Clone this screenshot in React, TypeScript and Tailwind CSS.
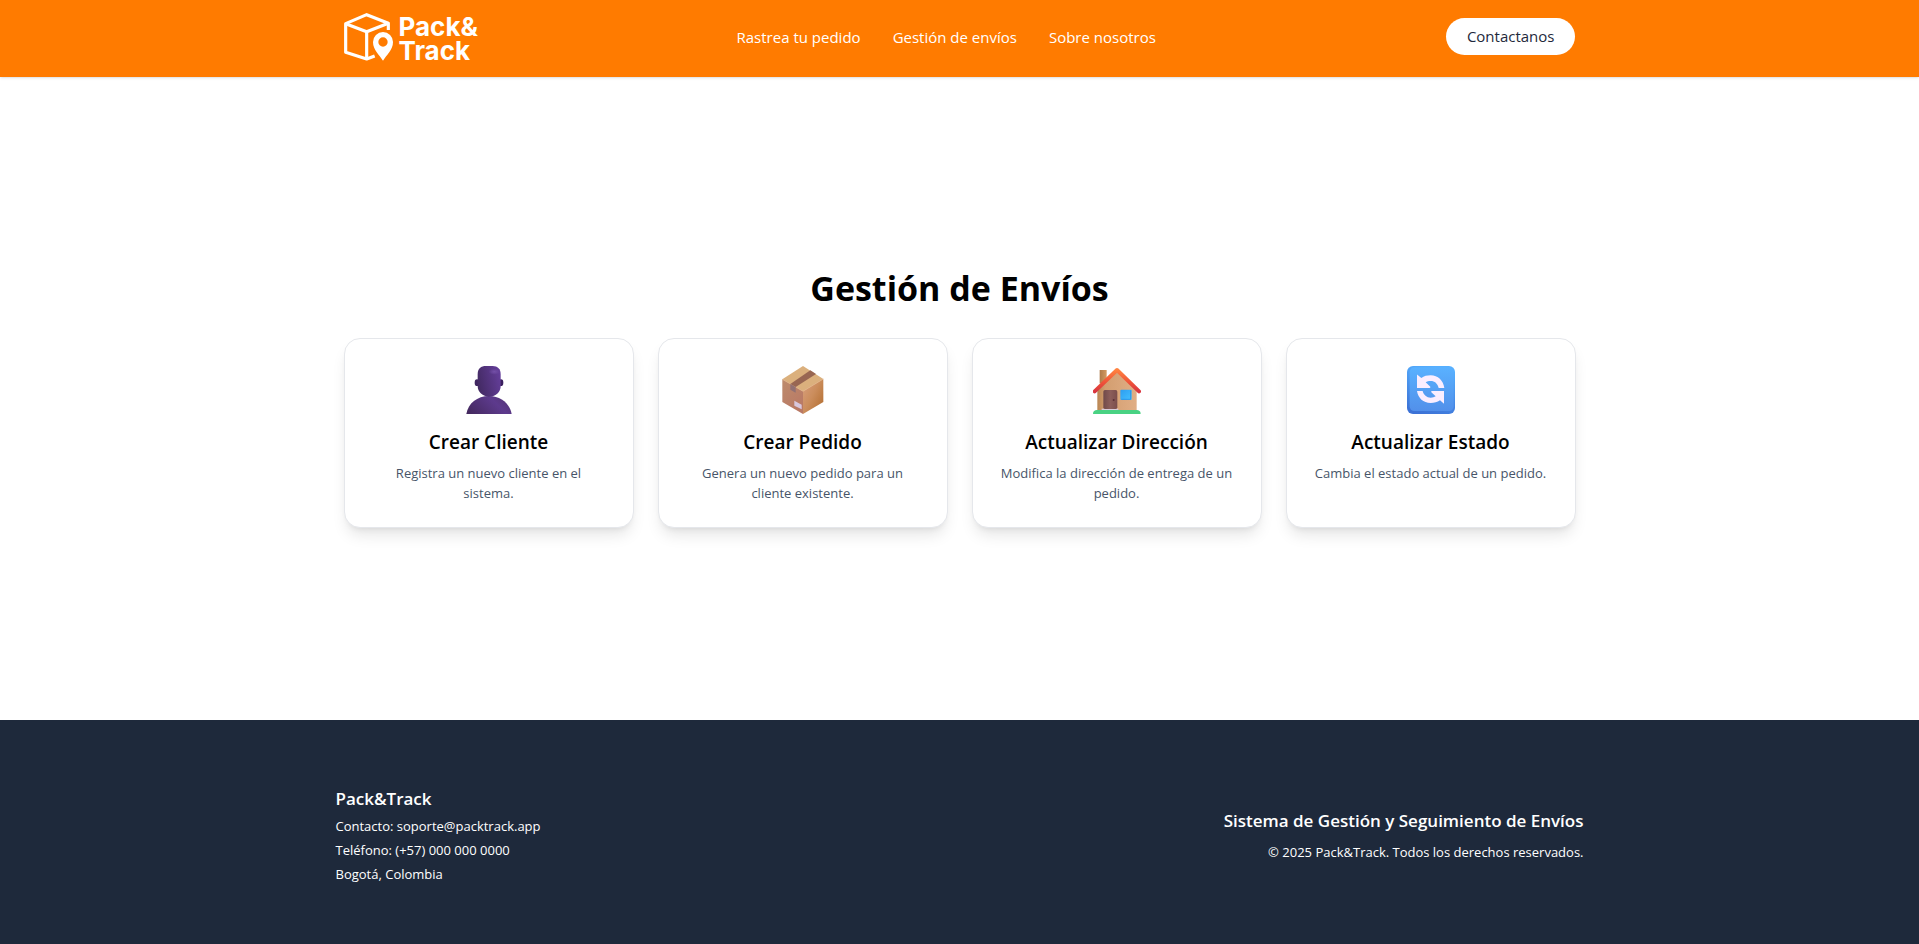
import type { ReactNode } from "react";

function LogoMark() {
  return (
    <svg viewBox="42 36 150 147" className="h-[49px] w-[50px] shrink-0" fill="none" aria-hidden="true">
      <g stroke="#fff" strokeWidth="9.5" strokeLinejoin="round">
        <path d="M175 90V70L110 44L47 71V157L110 177L134 168" />
        <path d="M47 71L110 95L175 70" />
        <path d="M110 95V177" />
      </g>
      <path
        d="M159 182C149 166 129 150 129 126A30 30 0 0 1 189 126C189 150 169 166 159 182Z"
        fill="#ff7b00"
        stroke="#ff7b00"
        strokeWidth="9"
      />
      <path
        fill="#fff"
        fillRule="evenodd"
        d="M159 182C149 166 129 150 129 126A30 30 0 0 1 189 126C189 150 169 166 159 182ZM159 112A14 14 0 1 0 159 140A14 14 0 1 0 159 112Z"
      />
    </svg>
  );
}

function PersonIcon() {
  return (
    <svg viewBox="375 108 144 144" className="size-12" aria-hidden="true">
      <defs>
        <linearGradient id="person-head" x1="0" y1="0.6" x2="1" y2="0.3">
          <stop offset="0" stopColor="#432a63" />
          <stop offset="1" stopColor="#643e9a" />
        </linearGradient>
        <linearGradient id="person-body" x1="0" y1="0.8" x2="1" y2="0.4">
          <stop offset="0" stopColor="#44295f" />
          <stop offset="0.7" stopColor="#5d3a8d" />
          <stop offset="1" stopColor="#543478" />
        </linearGradient>
        <radialGradient id="person-shine">
          <stop offset="0" stopColor="#7450a8" />
          <stop offset="1" stopColor="#7450a8" stopOpacity="0" />
        </radialGradient>
      </defs>
      <ellipse cx="411" cy="158" rx="7" ry="10" fill="#3f2560" />
      <ellipse cx="483" cy="158" rx="7" ry="10" fill="#3a1f5e" />
      <path d="M379 252C384 220 412 198 447 198S509 220 515 252Z" fill="url(#person-body)" />
      <path d="M413 132C413 116 423 108 438 108H458C473 108 482 117 482 132V168C482 186 468 200 448 200S413 186 413 168Z" fill="url(#person-head)" />
      <ellipse cx="463" cy="125" rx="17" ry="9" fill="url(#person-shine)" />
    </svg>
  );
}

function PackageIcon() {
  return (
    <svg viewBox="386 108 144 144" className="size-12" aria-hidden="true">
      <defs>
        <linearGradient id="box-left" x1="0" y1="0" x2="0.6" y2="1">
          <stop offset="0" stopColor="#bd8b6c" />
          <stop offset="1" stopColor="#b97965" />
        </linearGradient>
        <linearGradient id="box-right" x1="0" y1="0.2" x2="0.8" y2="0.9">
          <stop offset="0" stopColor="#d69c78" />
          <stop offset="0.5" stopColor="#cb8d5c" />
          <stop offset="1" stopColor="#b87439" />
        </linearGradient>
      </defs>
      <path d="M458 108L519 147L458 184L396 148Z" fill="#dbb07d" />
      <path d="M396 148L458 184V252L396 216Z" fill="url(#box-left)" />
      <path d="M458 184L519 147V216L458 252Z" fill="url(#box-right)" />
      <path d="M396 148L458 184L519 147" fill="none" stroke="#e3b184" strokeWidth="2" />
      <path d="M480 121L497 132L436 171L420 162Z" fill="#986652" />
      <path d="M420 162L436 171V188L420 179Z" fill="#917072" />
      <path d="M432 212L454 224V238L432 227Z" fill="#d8c7dd" />
    </svg>
  );
}

function HouseIcon() {
  return (
    <svg viewBox="385 108 144 144" className="size-12" aria-hidden="true">
      <defs>
        <linearGradient id="house-wall">
          <stop offset="0" stopColor="#b98653" />
          <stop offset="0.2" stopColor="#d39e70" />
          <stop offset="1" stopColor="#e0ae85" />
        </linearGradient>
        <linearGradient id="house-chimney">
          <stop offset="0" stopColor="#ae7a49" />
          <stop offset="1" stopColor="#d49b61" />
        </linearGradient>
        <linearGradient id="house-roof" x1="0" y1="0" x2="0" y2="1">
          <stop offset="0" stopColor="#ff8240" />
          <stop offset="0.6" stopColor="#ee5138" />
          <stop offset="1" stopColor="#d93640" />
        </linearGradient>
        <linearGradient id="house-door">
          <stop offset="0" stopColor="#704a4a" />
          <stop offset="0.5" stopColor="#8c5e5a" />
          <stop offset="1" stopColor="#7a4e4c" />
        </linearGradient>
        <linearGradient id="house-window" x1="0" y1="0" x2="1" y2="1">
          <stop offset="0" stopColor="#2d9df0" />
          <stop offset="1" stopColor="#44c0ff" />
        </linearGradient>
      </defs>
      <path d="M405 120H426V160H405Z" fill="url(#house-chimney)" />
      <path d="M457 124L516 178V242H398V178Z" fill="url(#house-wall)" />
      <path d="M411 236H461V242H411Z" fill="#d6cbd9" />
      <rect x="416" y="180" width="42" height="57" rx="5" fill="url(#house-door)" />
      <circle cx="447" cy="210" r="3" fill="#5b3036" />
      <rect x="467" y="179" width="34" height="31" rx="3" fill="url(#house-window)" />
      <path d="M498 181V208H470" fill="none" stroke="#2588e0" strokeWidth="2" />
      <path d="M390 184L457 120L523 184" fill="none" stroke="url(#house-roof)" strokeWidth="12" strokeLinecap="round" strokeLinejoin="round" />
      <path d="M385 252C385 243 390 240 397 240H516C523 240 528 243 528 252Z" fill="#49d283" />
    </svg>
  );
}

function RefreshIcon() {
  return (
    <svg viewBox="381 108 144 144" className="size-12" aria-hidden="true">
      <defs>
        <linearGradient id="refresh-face" x1="0" y1="0" x2="0" y2="1">
          <stop offset="0" stopColor="#59b1ff" />
          <stop offset="1" stopColor="#5290ea" />
        </linearGradient>
        <linearGradient id="refresh-edge" x1="0.6" y1="0" x2="0.3" y2="1">
          <stop offset="0" stopColor="#55afff" />
          <stop offset="1" stopColor="#3c72d6" />
        </linearGradient>
      </defs>
      <rect x="381" y="108" width="144" height="144" rx="18" fill="url(#refresh-edge)" />
      <rect x="389" y="112" width="132" height="131" rx="14" fill="url(#refresh-face)" />
      <g fill="#fbeeff">
        <path d="M412 134L424 144C432 138 441 136 452 136C474 136 490 152 493 174H476C473 161 464 153 452 153C446 153 441 154 437 157L451 170Q452 174 448 174H411V137Q411 133 412 134Z" />
        <path d="M492 221L480 211C472 217 463 219 452 219C430 219 414 204 411 183H428C431 195 440 203 452 203C458 203 463 201 467 199L454 187Q452 183 456 183H492Z" />
      </g>
    </svg>
  );
}

const navLinks = ["Rastrea tu pedido", "Gestión de envíos", "Sobre nosotros"];

const actions: { title: string; text: string; icon: ReactNode }[] = [
  { title: "Crear Cliente", text: "Registra un nuevo cliente en el sistema.", icon: <PersonIcon /> },
  { title: "Crear Pedido", text: "Genera un nuevo pedido para un cliente existente.", icon: <PackageIcon /> },
  { title: "Actualizar Dirección", text: "Modifica la dirección de entrega de un pedido.", icon: <HouseIcon /> },
  { title: "Actualizar Estado", text: "Cambia el estado actual de un pedido.", icon: <RefreshIcon /> },
];

export default function App() {
  return (
    <div className="flex min-h-screen flex-col bg-white font-['Segoe_UI','Open_Sans',sans-serif] text-black">
      <header className="bg-[#ff7b00] shadow-sm">
        <div className="mx-auto flex max-w-7xl items-center justify-between px-6 pt-3 pb-4">
          <a href="#" className="flex h-[49px] items-start gap-[5px] text-white">
            <LogoMark />
            <span className="w-20 pt-[3px] font-['Inter',sans-serif] text-[26px] leading-6 font-bold">Pack&amp; Track</span>
          </a>
          <nav className="mr-8 flex gap-8">
            {navLinks.map((label) => (
              <a key={label} href="#" className="text-[15px] leading-6 text-white">
                {label}
              </a>
            ))}
          </nav>
          <a href="#" className="rounded-full bg-white px-[21px] py-2 text-[15px] leading-[21px] font-medium text-[#1e293b]">
            Contactanos
          </a>
        </div>
      </header>

      <main className="flex flex-1 flex-col justify-center pb-1">
        <div className="mx-auto w-full max-w-7xl px-6">
          <h1 className="mb-7 text-center text-[34px] leading-11 font-bold">Gestión de Envíos</h1>
          <div className="grid grid-cols-4 gap-6">
            {actions.map(({ title, text, icon }) => (
              <a
                key={title}
                href="#"
                className="flex flex-col items-center rounded-2xl border border-gray-200 bg-white p-6 text-center shadow-lg"
              >
                <span className="mb-[10px] flex h-[54px] items-center">{icon}</span>
                <h2 className="mb-1.5 text-[19px] leading-[30px] font-semibold">{title}</h2>
                <p className="px-0.5 text-[13px] leading-5 text-[#475569]">{text}</p>
              </a>
            ))}
          </div>
        </div>
      </main>

      <footer className="bg-[#1e293b] pt-16 pb-15 text-white">
        <div className="mx-auto flex max-w-7xl items-center justify-between px-4">
          <div className="text-[13px] leading-5">
            <h3 className="mb-0.5 text-[17px] leading-[30px] font-semibold">Pack&amp;Track</h3>
            <div className="flex flex-col gap-1">
              <p>Contacto: soporte@packtrack.app</p>
              <p>Teléfono: (+57) 000 000 0000</p>
              <p>Bogotá, Colombia</p>
            </div>
          </div>
          <div className="text-right text-[13px] leading-5">
            <p className="mb-1.5 text-[17px] leading-[30px] font-semibold">Sistema de Gestión y Seguimiento de Envíos</p>
            <p>© 2025 Pack&amp;Track. Todos los derechos reservados.</p>
          </div>
        </div>
      </footer>
    </div>
  );
}
